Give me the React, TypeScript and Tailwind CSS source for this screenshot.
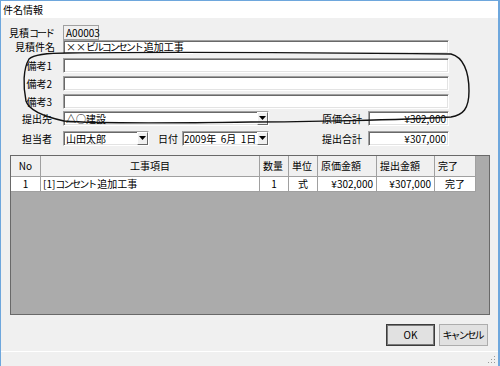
const font = { fontFamily: '"Noto Sans CJK JP", "Liberation Sans", sans-serif' };

const sunken =
  "bg-white border-t border-l border-t-[#a0a0a0] border-l-[#a0a0a0] border-b border-r border-b-white border-r-white shadow-[inset_1px_1px_0_#696969,inset_-1px_-1px_0_#e3e3e3]";

// narrow katakana like the proportional UI font in the screenshot
const Kana = ({ children }: { children: React.ReactNode }) => (
  <span className="tracking-[-2px] mr-[2px]">{children}</span>
);

function DropArrow() {
  return (
    <div className="w-[11px] h-full flex items-center justify-center bg-[#f0f0f0] border-t border-l border-white border-b border-r border-b-[#696969] border-r-[#696969]">
      <svg width="7" height="5" viewBox="0 0 7 5">
        <path d="M0 0 H7 L3.5 4 Z" fill="#000" />
      </svg>
    </div>
  );
}

const columns = [
  { label: "No", w: "w-[30px]", head: "justify-center", cell: "justify-center", value: <>1</> },
  {
    label: "工事項目",
    w: "w-[219px]",
    head: "justify-center",
    cell: "justify-start pl-[2px]",
    value: (
      <>
        [1]<Kana>コンセント</Kana>追加工事
      </>
    ),
  },
  { label: "数量", w: "w-[29px]", head: "justify-start pl-[3px]", cell: "justify-center", value: <>1</> },
  { label: "単位", w: "w-[29px]", head: "justify-start pl-[3px]", cell: "justify-center", value: <>式</> },
  { label: "原価金額", w: "w-[59px]", head: "justify-start pl-[3px]", cell: "justify-end pr-[3px]", value: <>¥302,000</> },
  { label: "提出金額", w: "w-[58px]", head: "justify-start pl-[3px]", cell: "justify-end pr-[3px]", value: <>¥307,000</> },
  { label: "完了", w: "w-[41px]", head: "justify-start pl-[3px]", cell: "justify-center", value: <>完了</> },
];

export default function App() {
  return (
    <div
      className="relative w-[500px] h-[366px] overflow-hidden bg-[#f0f0f0] border-t border-l border-r-2 border-[#6ea7dd] flex flex-col text-[10px] leading-none text-black"
      style={font}
    >
      {/* title bar */}
      <div className="h-[17px] bg-white flex items-center pl-[2px] shrink-0">件名情報</div>

      {/* 見積コード */}
      <div className="flex items-center h-[15px] mt-[7px]">
        <span className="w-[54px] text-right">
          見積<Kana>コード</Kana>
        </span>
        <div className="ml-[8px] w-[36px] h-full flex items-center pl-[2px] border border-[#a0a0a0] bg-[#f0f0f0]">A00003</div>
      </div>

      {/* 見積件名 */}
      <div className="flex items-center h-[14px]">
        <span className="w-[54px] text-right">見積件名</span>
        <div className={`ml-[8px] w-[386px] h-full flex items-center pl-[2px] ${sunken}`}>
          ××<Kana>ビルコンセント</Kana>追加工事
        </div>
      </div>

      {/* 備考 */}
      <div className="flex items-center h-[15px] mt-[4px]">
        <span className="w-[51px] text-right">備考1</span>
        <div className={`ml-[11px] w-[386px] h-full ${sunken}`} />
      </div>
      <div className="flex items-center h-[15px] mt-[3px]">
        <span className="w-[51px] text-right">備考2</span>
        <div className={`ml-[11px] w-[386px] h-full ${sunken}`} />
      </div>
      <div className="flex items-center h-[15px] mt-[3px]">
        <span className="w-[51px] text-right">備考3</span>
        <div className={`ml-[11px] w-[386px] h-full ${sunken}`} />
      </div>

      {/* 提出先 / 原価合計 */}
      <div className="flex items-center h-[15px] mt-[2px]">
        <span className="w-[51px] text-right">提出先</span>
        <div className={`ml-[11px] w-[206px] h-full flex items-center ${sunken}`}>
          <span className="flex-1 pl-[2px]">△○建設</span>
          <DropArrow />
        </div>
        <span className="ml-[53px] w-[46px]">原価合計</span>
        <div className={`w-[81px] h-full flex items-center justify-end pr-[2px] ${sunken}`}>¥302,000</div>
      </div>

      {/* 担当者 / 日付 / 提出合計 */}
      <div className="flex items-center h-[15px] mt-[5px]">
        <span className="w-[51px] text-right">担当者</span>
        <div className={`ml-[11px] w-[86px] h-full flex items-center ${sunken}`}>
          <span className="flex-1 pl-[2px]">山田太郎</span>
          <DropArrow />
        </div>
        <span className="ml-[9px] w-[24px]">日付</span>
        <div className={`w-[87px] h-full flex items-center ${sunken}`}>
          <span className="flex-1 pl-[1px] whitespace-pre">2009年  6月  1日</span>
          <DropArrow />
        </div>
        <span className="ml-[53px] w-[46px]">提出合計</span>
        <div className={`w-[81px] h-full flex items-center justify-end pr-[2px] ${sunken}`}>¥307,000</div>
      </div>

      {/* grid */}
      <div className="ml-[9px] mt-[9px] w-[480px] h-[160px] bg-[#ababab] border border-[#696969] flex flex-col">
        <div className="flex h-[21px]">
          {columns.map((c) => (
            <div key={c.label} className={`${c.w} h-full flex items-center bg-[#f0f0f0] border-r border-b border-[#a0a0a0] ${c.head}`}>
              {c.label}
            </div>
          ))}
        </div>
        <div className="flex h-[15px]">
          {columns.map((c) => (
            <div key={c.label} className={`${c.w} h-full flex items-center bg-white border-r border-b border-[#a0a0a0] whitespace-nowrap ${c.cell}`}>
              {c.value}
            </div>
          ))}
        </div>
      </div>

      {/* buttons */}
      <div className="flex justify-end gap-[4px] pr-[10px] mt-[9px]">
        <button className="w-[49px] h-[22px] bg-[#e1e1e1] border border-[#3c3c3c] shadow-[inset_0_0_0_1px_#7a7a7a] flex items-center justify-center">
          OK
        </button>
        <button className="w-[49px] h-[22px] bg-[#e1e1e1] border border-[#adadad] flex items-center justify-center">
          <Kana>キャンセル</Kana>
        </button>
      </div>

      {/* status strip */}
      <div className="mt-[5px] flex-1 border-t border-white relative">
        <svg className="absolute right-[2px] bottom-[2px]" width="10" height="10" viewBox="0 0 10 10">
          {[
            [8, 2],
            [5, 5],
            [8, 5],
            [2, 8],
            [5, 8],
            [8, 8],
          ].map(([x, y]) => (
            <rect key={`${x}-${y}`} x={x} y={y} width="1" height="1" fill="#9a9a9a" />
          ))}
        </svg>
      </div>

      {/* hand-drawn loop */}
      <svg className="absolute left-0 top-0 pointer-events-none" width="500" height="366" viewBox="0 0 500 366">
        <path
          d="M67 52 C150 51 350 52 450 53 C462 56 468 70 468 90 C468 108 462 114 450 116 C400 119 300 121 250 121 C180 122 100 123 63 120 C45 116 28 110 25 100 C22 85 22 68 28 58 C33 53 50 52 67 52 Z"
          fill="none"
          stroke="#111"
          strokeWidth="1.4"
        />
      </svg>
    </div>
  );
}
